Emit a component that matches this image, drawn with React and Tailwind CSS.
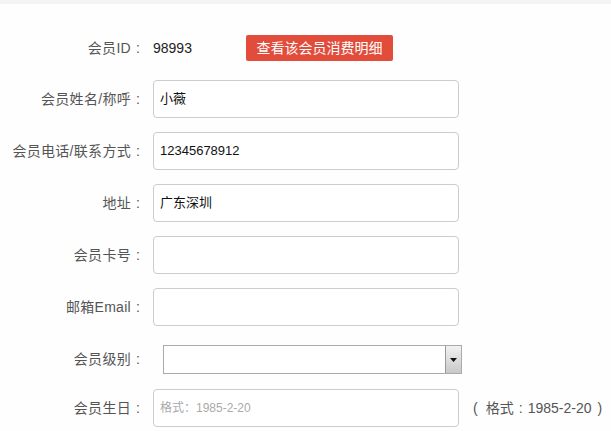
const font = { fontFamily: '"Liberation Sans", "Noto Sans CJK SC", sans-serif' };

function Colon() {
  return <span className="inline-block w-[14px] text-center">:</span>;
}

function Label({ children }) {
  return (
    <div className="w-[145px] shrink-0 text-right text-[14px] tracking-[0.3px] text-[#555]">
      {children}
      <Colon />
    </div>
  );
}

function InputRow({ label, value, className = "" }) {
  return (
    <div className={`flex h-[38px] items-center ${className}`}>
      <Label>{label}</Label>
      <div className="ml-[8px] flex h-[38px] w-[306px] items-center rounded-[4px] border border-[#cccccc] bg-white px-[6px] text-[13px] text-[#111]">
        {value}
      </div>
    </div>
  );
}

export default function App() {
  return (
    <div className="h-[431px] w-[611px] overflow-hidden bg-[#fefefe]" style={font}>
      <div className="h-[4px] bg-[#f4f4f4]" />

      <div className="mt-[31px] flex h-[26px] items-center">
        <Label>会员ID</Label>
        <span className="ml-[8px] text-[14px] text-[#222]">98993</span>
        <button className="ml-[54px] h-[26px] w-[147px] rounded-[2px] bg-[#e24c3b] text-[14px] text-white">
          查看该会员消费明细
        </button>
      </div>

      <div className="mt-[19px] flex flex-col gap-[14px]">
        <InputRow label="会员姓名/称呼" value="小薇" />
        <InputRow label="会员电话/联系方式" value="12345678912" />
        <InputRow label="地址" value="广东深圳" />
        <InputRow label="会员卡号" value="" />
        <InputRow label="邮箱Email" value="" />
      </div>

      <div className="mt-[19px] flex h-[29px] items-center">
        <Label>会员级别</Label>
        <div className="ml-[18px] flex h-[29px] w-[299px] border border-[#aaaaaa] bg-white">
          <div className="flex-1" />
          <div className="flex w-[16px] items-center justify-center border-l border-[#999] bg-gradient-to-b from-[#f2f2f2] to-[#c8c8c8]">
            <svg width="7" height="4" viewBox="0 0 7 4">
              <path d="M0 0 L7 0 L3.5 4 Z" fill="#111" />
            </svg>
          </div>
        </div>
      </div>

      <div className="mt-[15px] flex h-[38px] items-center">
        <Label>会员生日</Label>
        <div className="ml-[8px] flex h-[38px] w-[306px] items-center rounded-[4px] border border-[#cccccc] bg-white px-[6px] text-[12px] text-[#aaa]">
          格式：1985-2-20
        </div>
        <span className="ml-[14px] text-[14px] text-[#555]">
          (<span className="ml-[8px]">格式</span>
          <Colon />
          1985-2-20<span className="ml-[6px]">)</span>
        </span>
      </div>
    </div>
  );
}
